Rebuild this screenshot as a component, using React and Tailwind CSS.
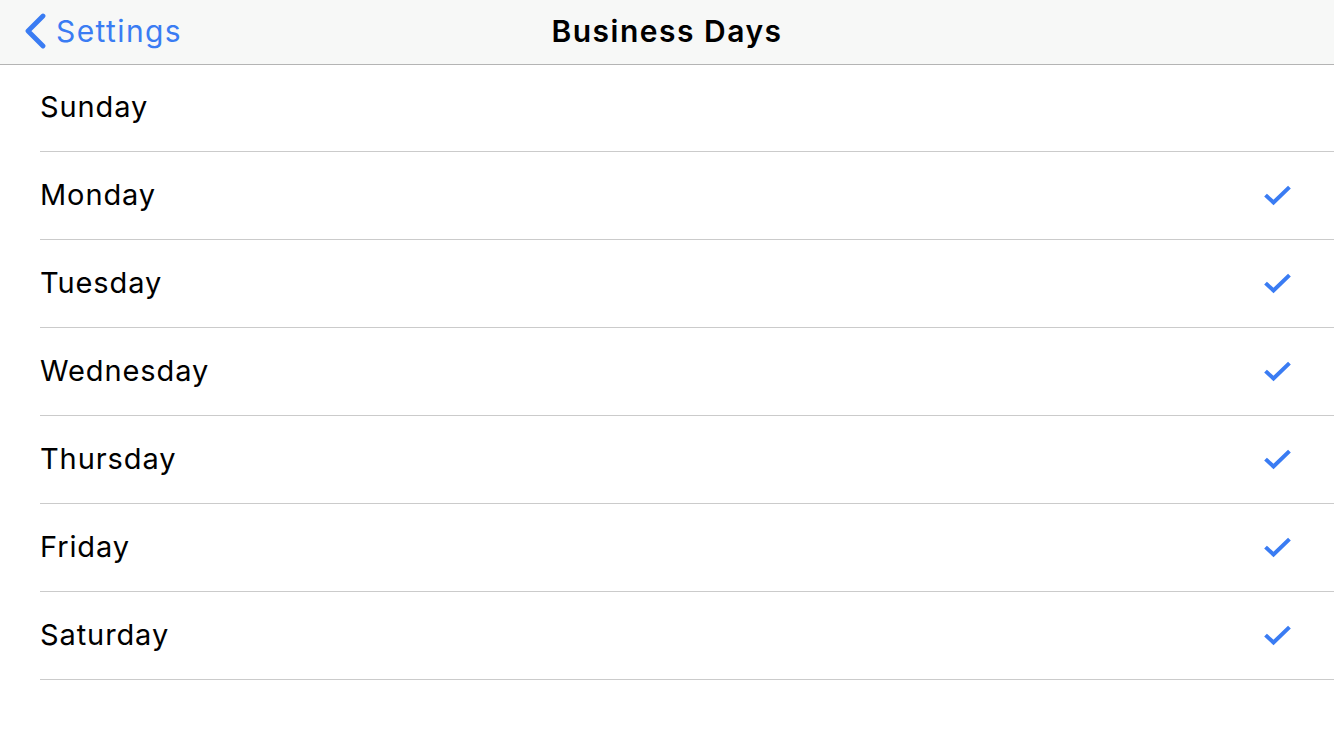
const days = [
  { name: 'Sunday', on: false },
  { name: 'Monday', on: true },
  { name: 'Tuesday', on: true },
  { name: 'Wednesday', on: true },
  { name: 'Thursday', on: true },
  { name: 'Friday', on: true },
  { name: 'Saturday', on: true },
];

const Check = () => (
  <svg width="28" height="22" viewBox="0 0 28 22" fill="none">
    <path d="M3 11.5L9.5 17.5L24 3.5" stroke="#3a7cf3" strokeWidth="4" strokeLinecap="square" />
  </svg>
);

export default function App() {
  return (
    <div className="w-[1334px] h-[750px] bg-white overflow-hidden font-['Inter',sans-serif]">
      {/* Nav bar */}
      <div className="relative h-[65px] bg-[#f7f8f7] border-b border-[#b4b4b4] flex items-center pb-[2px]">
        <div className="flex items-center pl-[24px] gap-[9px] text-[#3a7cf3]">
          <svg width="23" height="36" viewBox="0 0 23 36" fill="none">
            <path d="M19 3L4 18L19 33" stroke="#3a7cf3" strokeWidth="4.8" strokeLinecap="round" strokeLinejoin="round" />
          </svg>
          <span className="text-[30px] tracking-[1.4px]">Settings</span>
        </div>
        <div className="absolute inset-0 flex items-center justify-center pb-[2px]">
          <span className="text-[30px] font-semibold tracking-[1.5px] text-black">Business Days</span>
        </div>
      </div>

      {/* Day list */}
      <div className="pl-[40px]">
        {days.map((d, i) => (
          <div
            key={d.name}
            className={`flex items-center justify-between border-b border-[#cbcbcb] pr-[42px] ${i === 0 ? 'h-[87px]' : 'h-[88px]'}`}
          >
            <span className="text-[29px] tracking-[0.9px] text-black pb-[2px]">{d.name}</span>
            {d.on && <Check />}
          </div>
        ))}
      </div>
    </div>
  );
}
